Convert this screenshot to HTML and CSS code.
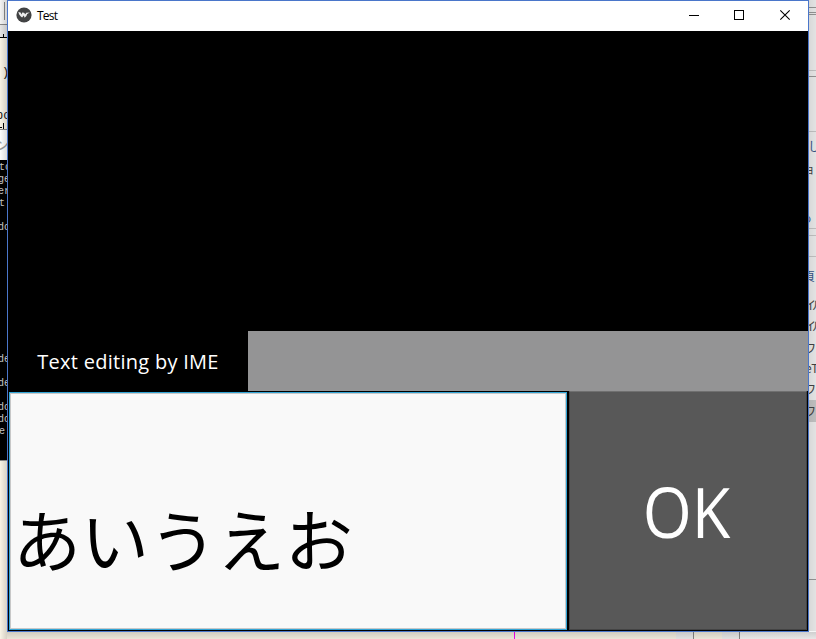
FILE: index.html
```html
<!DOCTYPE html>
<html lang="ja">
<head>
<meta charset="utf-8">
<title>Test</title>
<link rel="stylesheet" href="styles.css">
</head>
<body>
<div class="desktop">
  <svg class="behind" width="816" height="639" viewBox="0 0 816 639" shape-rendering="crispEdges">
    <defs>
      <linearGradient id="sideShade"><stop offset="0" stop-color="#000" stop-opacity=".1"/><stop offset="1" stop-color="#000" stop-opacity="0"/></linearGradient>
      <linearGradient id="leftShade"><stop offset="0" stop-color="#000" stop-opacity="0"/><stop offset="1" stop-color="#000" stop-opacity=".14"/></linearGradient>
      <linearGradient id="downShade" x2="0" y2="1"><stop offset="0" stop-color="#000" stop-opacity=".16"/><stop offset="1" stop-color="#000" stop-opacity=".06"/></linearGradient>
    </defs>
    <rect width="816" height="639" fill="#f8f3e5"/>
    <rect width="8" height="24" fill="#f3f3f3"/>
    <rect x="4" y="2" width="1" height="18" fill="#888"/>
    <rect y="24" width="8" height="1" fill="#888"/>
    <rect y="25" width="8" height="12" fill="#e6e6e6"/>
    <rect y="37" width="8" height="1"/>
    <rect x="3" y="34" width="1" height="4"/>
    <g class="code"><text x="2" y="76">)</text><text x="-4" y="119">po</text></g>
    <rect x="3" y="123" width="1" height="6"/><rect y="127" width="2" height="1"/>
    <rect y="129" width="8" height="31" fill="#fff"/>
    <rect y="129" width="8" height="1" fill="#888"/>
    <text class="jp pale" x="-5" y="150">ン</text>
    <rect y="160" width="8" height="300"/>
    <g class="console">
      <text x="-1" y="170">to</text><text x="-2" y="182">ge</text><text x="-2" y="194">er</text><text x="-1" y="206">t</text><text x="-2" y="230">do</text>
      <text x="-2" y="362">de</text><text x="-2" y="386">de</text><text x="-2" y="410">do</text><text x="-2" y="422">do</text><text x="-1" y="434">e</text>
    </g>
    <rect y="460" width="8" height="1" fill="#888"/>
    <rect x="808" width="8" height="639" fill="#f0f0f0"/>
    <g fill="#999">
      <rect x="808" y="7" width="8" height="1"/><rect x="808" y="12" width="8" height="1"/>
      <rect x="808" y="14" width="8" height="1"/><rect x="808" y="76" width="8" height="1"/>
      <rect x="808" y="579" width="8" height="1"/>
    </g>
    <g fill="#c8c8c8">
      <rect x="808" y="70" width="8" height="1"/><rect x="808" y="131" width="8" height="1"/>
      <rect x="808" y="228" width="8" height="1"/><rect x="808" y="235" width="8" height="1"/>
      <rect x="808" y="256" width="8" height="1"/><rect x="808" y="400" width="8" height="22"/>
    </g>
    <g class="jp">
      <text class="blue" x="808" y="151">し</text><text x="803" y="174">ョ</text><text class="blue" x="800" y="222">も</text>
      <text class="blue" x="803" y="281">頁</text><text x="804" y="310" textLength="20">イル</text><text x="804" y="331" textLength="20">イル</text><text x="804" y="353">ワ</text>
      <text x="805" y="373">eT</text><text x="804" y="394">ワ</text><text x="804" y="416">ワ</text>
    </g>
    <rect x="514" y="631" width="1" height="8" fill="#f0f"/>
    <rect x="676" y="631" width="17" height="8" fill="#eee"/>
    <rect x="693" y="631" width="1" height="8" fill="#888"/>
    <rect x="722" y="631" width="17" height="8" fill="#eee"/>
    <rect x="739" y="631" width="1" height="8" fill="#888"/>
    <rect x="740" y="631" width="76" height="8" fill="#f6f6f6"/>
    <rect width="7" height="160" fill="url(#leftShade)"/>
    <rect y="461" width="7" height="178" fill="url(#leftShade)"/>
    <rect x="809" width="16" height="631" fill="url(#sideShade)"/>
    <rect x="7" y="632" width="809" height="7" fill="url(#downShade)"/>
  </svg>

  <main class="window">
    <header class="titlebar">
      <svg class="logo" width="16" height="16" viewBox="0 0 16 16">
        <circle cx="8" cy="8" r="7.6" fill="#424344"/>
        <path d="M2.300 5l2.300.6.9 1.800.7-2 1.800.3 1.300 1.500 1-1.500 3.600-.2-2.700 1.500-.8 2-1.800 1.800-.8-2.300-1.700 2.100-1.300-1-1.600-2z" fill="#eee"/>
      </svg>
      <h1 class="title">Test</h1>
      <svg class="controls" width="138" height="30" viewBox="0 0 138 30" fill="none" stroke="#000">
        <path d="M19 14.500h10M64.500 9.500h9v9h-9z" shape-rendering="crispEdges"/>
        <path d="M110.300 9.300l9.400 9.400M119.700 9.300l-9.400 9.400" stroke-width="1.1"/>
      </svg>
    </header>
    <section class="app">
      <div class="canvas"></div>
      <div class="ime">
        <div class="ime-label"><span>Text editing by IME</span></div>
        <div class="ime-text"></div>
      </div>
      <div class="entry">
        <div class="input"><span>あいうえお</span></div>
        <div class="button"><span>OK</span></div>
      </div>
    </section>
  </main>
</div>
</body>
</html>
```

FILE: styles.css
```css
body { margin: 0; overflow: hidden; }
.desktop { position: relative; width: 816px; height: 639px; overflow: hidden; }
.behind { position: absolute; inset: 0; }
.code { font: 12px "Liberation Mono", monospace; fill: #111; }
.console { font: 10px "Liberation Mono", monospace; fill: #c4c4c4; }
.jp { font: 12px "Noto Sans CJK JP", sans-serif; fill: #444; }
.jp.pale { font-size: 14px; fill: #999; }
.jp .blue { fill: #35568c; }

.window {
  position: absolute;
  left: 7px;
  top: 0;
  box-sizing: border-box;
  width: 802px;
  height: 632px;
  border: 1px solid #4a76ca;
  background: #000;
}
.titlebar { display: flex; align-items: center; height: 30px; background: #fff; }
.logo { margin: 0 5px 2px 8px; }
.title { margin: 0; flex: 1; font: 12px/16px "Open Sans", sans-serif; letter-spacing: -0.8px; }
.app { display: flex; flex-direction: column; height: 600px; }
.canvas { height: 300px; }
.ime { display: flex; height: 60px; }
.ime-label {
  display: flex;
  align-items: center;
  justify-content: center;
  box-sizing: border-box;
  width: 240px;
  padding-top: 2px;
  color: #fff;
  font: 400 20px/28px "Open Sans", sans-serif;
  letter-spacing: 0.27px;
  white-space: nowrap;
}
.ime-text { flex: 1; background: #949495; }
.entry { display: flex; height: 240px; }
.input {
  display: flex;
  align-items: center;
  box-sizing: border-box;
  width: 558px;
  height: 238px;
  margin: 1px;
  padding: 54px 0 0 3px;
  border: 1px solid #32a5d6;
  box-shadow: inset 0 0 0 1px #c8c8c8;
  background: #f9f9f9;
  color: #000;
  font: 68px/100px "Noto Sans CJK JP", sans-serif;
}
.button {
  display: flex;
  align-items: center;
  justify-content: center;
  box-sizing: border-box;
  width: 238px;
  height: 239px;
  margin: 0 1px 1px;
  padding-right: 3px;
  border: 1px solid #444;
  border-top-color: #707070;
  background: #585858;
  color: #fff;
  font: 400 70px/96px "Open Sans", sans-serif;
}
.button span { transform: scaleX(.9); }
```
